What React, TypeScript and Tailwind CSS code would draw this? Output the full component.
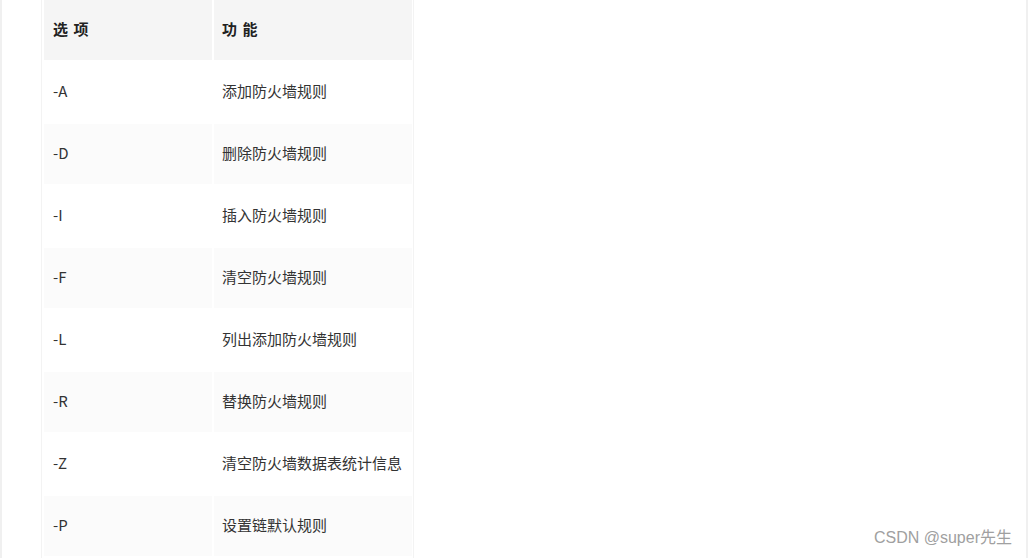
const rows: [string, string][] = [
  ['-A', '添加防火墙规则'],
  ['-D', '删除防火墙规则'],
  ['-I', '插入防火墙规则'],
  ['-F', '清空防火墙规则'],
  ['-L', '列出添加防火墙规则'],
  ['-R', '替换防火墙规则'],
  ['-Z', '清空防火墙数据表统计信息'],
  ['-P', '设置链默认规则'],
];

export default function App() {
  return (
    <div
      className="relative flex h-[558px] w-[1028px] overflow-hidden bg-white text-[15px] text-[#333]"
      style={{ fontFamily: '"Noto Sans CJK SC", "Noto Sans", sans-serif' }}
    >
      <div className="w-[2px] shrink-0 bg-[#f0f0f0]" />
      <div className="w-[39px] shrink-0" />
      <div className="w-px shrink-0 bg-[#f3f3f3]" />
      <div className="w-[2px] shrink-0" />

      <div className="grid h-fit grid-cols-[168px_198px] gap-[2px]">
        <div className="flex h-[60px] items-center bg-[#f5f5f5] pb-[2px] pl-[9px] font-bold tracking-[1px] text-[#222]">
          选 项
        </div>
        <div className="flex h-[60px] items-center bg-[#f5f5f5] pb-[2px] pl-[8px] font-bold tracking-[1px] text-[#222]">
          功 能
        </div>
        {rows.map(([opt, desc], i) => (
          <div key={opt} className="contents">
            <div
              className={`flex h-[60px] items-center pb-[2px] pl-[9px] ${i % 2 === 1 ? 'bg-[#fbfbfb]' : 'bg-white'}`}
            >
              {opt}
            </div>
            <div
              className={`flex h-[60px] items-center pb-[2px] pl-[8px] ${i % 2 === 1 ? 'bg-[#fbfbfb]' : 'bg-white'}`}
            >
              {desc}
            </div>
          </div>
        ))}
      </div>

      <div className="ml-px w-px shrink-0 bg-[#f3f3f3]" />
      <div className="flex-1" />
      <div className="w-[2px] shrink-0 bg-[#f0f0f0]" />

      <div
        className="absolute bottom-[8px] right-[16px] text-[16px] text-[#a0a0a0]"
        style={{ fontFamily: '"Liberation Sans", "Noto Sans CJK SC", sans-serif' }}
      >
        CSDN @super先生
      </div>
    </div>
  );
}
